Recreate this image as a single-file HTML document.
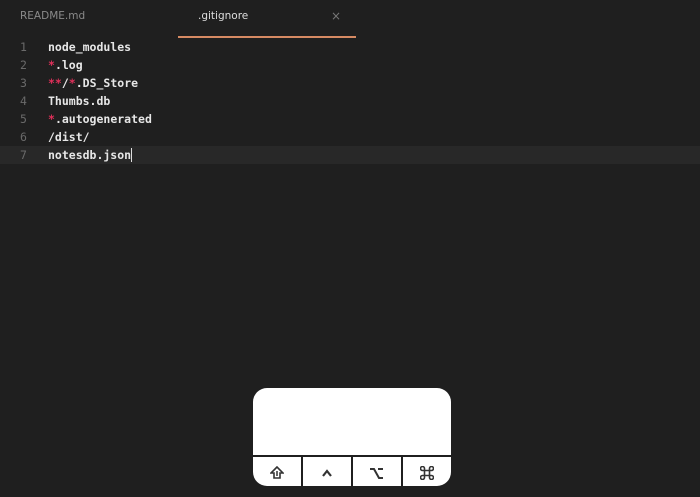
<!DOCTYPE html>
<html><head><style>
body{margin:0;width:700px;height:497px;background:#1f1f1f;position:relative;overflow:hidden;font-family:"DejaVu Sans Mono",monospace;}
.tab{position:absolute;top:10px;font-family:"DejaVu Sans","Liberation Sans",sans-serif;font-size:10.5px;}
.ln{position:absolute;left:0;width:700px;height:18px;line-height:18px;font-size:11.5px;color:#e6e6e6;font-weight:bold;}
.ln .n{position:absolute;left:20px;color:#6a6a6a;font-weight:normal;}
.ln .t{position:absolute;left:48px;}
.r{color:#e0305a}
.kb{position:absolute;left:253px;top:388px;width:198px;height:98px;background:#fff;border-radius:14px;overflow:hidden;}
.kb .row{position:absolute;left:0;top:67px;width:198px;height:31px;border-top:2px solid #1f1f1f;display:flex;}
.kb .b{flex:1;border-right:2px solid #1f1f1f;display:flex;align-items:center;justify-content:center;color:#333;font-size:14px;font-weight:bold;}
.kb .b:last-child{border-right:none}
</style></head><body>
<div class="tab" style="left:20px;color:#8a8a8a">README.md</div>
<div class="tab" style="left:198px;color:#ddd">.gitignore</div>
<div class="tab" style="left:331px;color:#777;top:9px;font-size:12px">×</div>
<div style="position:absolute;left:178px;top:36px;width:178px;height:2px;background:#d68a63"></div>
<div class="ln" style="top:38px"><span class="n">1</span><span class="t">node_modules</span></div>
<div class="ln" style="top:56px"><span class="n">2</span><span class="t"><span class="r">*</span>.log</span></div>
<div class="ln" style="top:74px"><span class="n">3</span><span class="t"><span class="r">**</span>/<span class="r">*</span>.DS_Store</span></div>
<div class="ln" style="top:92px"><span class="n">4</span><span class="t">Thumbs.db</span></div>
<div class="ln" style="top:110px"><span class="n">5</span><span class="t"><span class="r">*</span>.autogenerated</span></div>
<div class="ln" style="top:128px"><span class="n">6</span><span class="t">/dist/</span></div>
<div class="ln" style="top:146px;background:#282828"><span class="n">7</span><span class="t">notesdb.json<span style="border-left:1px solid #ddd"></span></span></div>
<div class="kb"><div class="row">
<div class="b"><svg width="14" height="13" viewBox="0 0 14 13"><path d="M7 1 L1 7 H4 V12 H10 V7 H13 Z" fill="#fff" stroke="#333" stroke-width="1.6"/><path d="M7 5 V10" stroke="#333" stroke-width="1.5"/></svg></div>
<div class="b"><svg width="12" height="8" viewBox="0 0 12 8"><path d="M2 7 L6 2 L10 7" fill="none" stroke="#333" stroke-width="2.2"/></svg></div>
<div class="b"><svg width="16" height="12" viewBox="0 0 16 12"><path d="M1 2 H5 L10 11 H14 M9 2 H14" fill="none" stroke="#333" stroke-width="2"/></svg></div>
<div class="b"><svg width="14" height="14" viewBox="0 0 14 14"><path d="M4.5 4.5 H9.5 V9.5 H4.5 Z M4.5 4.5 V2.5 A2 2 0 1 0 2.5 4.5 H4.5 M9.5 4.5 V2.5 A2 2 0 1 1 11.5 4.5 H9.5 M4.5 9.5 V11.5 A2 2 0 1 1 2.5 9.5 H4.5 M9.5 9.5 V11.5 A2 2 0 1 0 11.5 9.5 H9.5" fill="none" stroke="#333" stroke-width="1.6"/></svg></div>
</div></div>
</body></html>
